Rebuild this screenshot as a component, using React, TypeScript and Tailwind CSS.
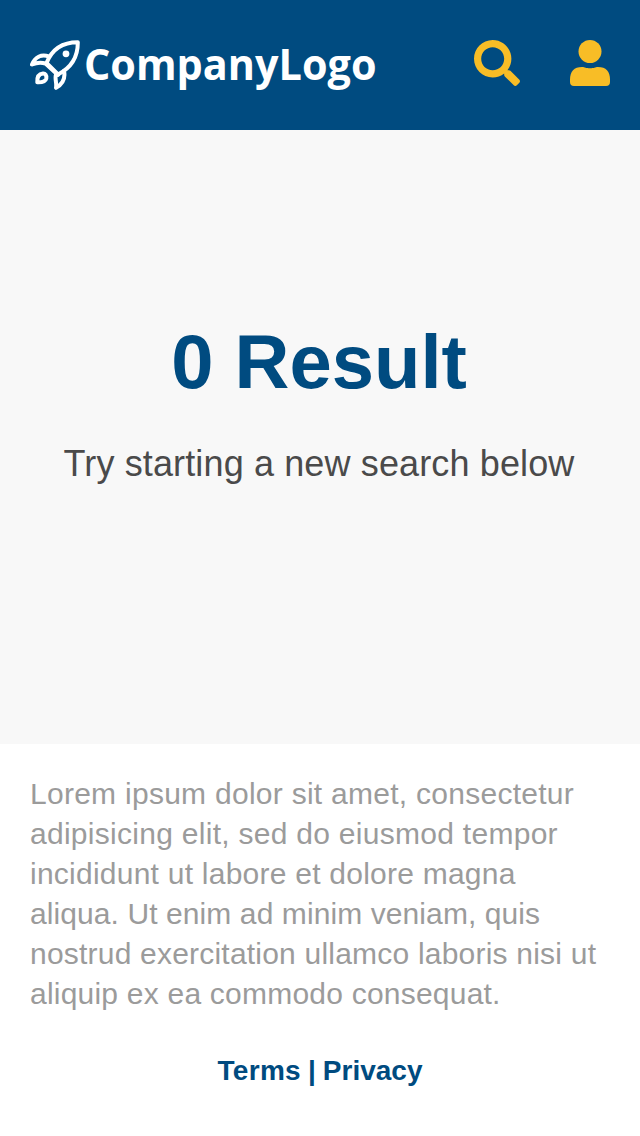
import { FaSearch } from "react-icons/fa";

function Rocket() {
  return (
    <svg viewBox="0 0 50 50" className="h-[50px] w-[50px] shrink-0" fill="none" stroke="white" strokeWidth="4" strokeLinejoin="round" strokeLinecap="round">
      <path d="M16.5 23C22 9 32 2.2 47.8 2.2C48 17 41 28 28 34.5Z" />
      <path d="M19 16.5C11 14 5 17 2 24.5C6.5 22.5 11 22 15.5 23.5L28 35" />
      <path d="M34 31C35.5 38 32.5 44 26 47.8C27 43 24.5 38.5 26 34.5" />
      <path d="M13 33.5C8 34 7 38 7.3 42.3C12 42.5 15.5 41.5 16.3 38.5C17 35.5 15 33.3 13 33.5Z" />
      <circle cx="36" cy="13.8" r="3.4" fill="white" stroke="none" />
    </svg>
  );
}

function User() {
  return (
    <svg viewBox="0 0 40 46" className="ml-[50px] h-[46px] w-10 shrink-0" fill="#f8bd26">
      <circle cx="20" cy="11.5" r="11.5" />
      <path d="M0 39.5C0 31.5 4 27 12 27C15 27 16 28.3 20 28.3C24 28.3 25 27 28 27C36 27 40 31.5 40 39.5V42Q40 46 36 46H4Q0 46 0 42Z" />
    </svg>
  );
}

export default function App() {
  return (
    <div className="flex h-[1136px] w-[640px] flex-col overflow-hidden bg-white font-['Liberation_Sans',Arial,sans-serif]">
      <header className="flex h-[130px] shrink-0 items-start bg-[#004b80] px-[30px] pt-10">
        <Rocket />
        <svg className="-mt-5 h-20 w-[310px] shrink-0 overflow-visible" viewBox="0 0 310 80">
          <text x="4" y="60.3" textLength="292.5" lengthAdjust="spacingAndGlyphs" fill="white" className="font-['Open_Sans',sans-serif] text-[43px] font-bold">CompanyLogo</text>
        </svg>
        <FaSearch className="ml-auto size-[46px] text-[#f8bd26]" />
        <User />
      </header>
      <main className="flex h-[614px] shrink-0 flex-col items-center bg-[#f8f8f8] pt-[187px] pr-0.5 whitespace-nowrap">
        <h1 className="text-[76px] leading-[90px] font-bold text-[#004b80]">0 Result</h1>
        <p className="mt-[33px] text-[36px] leading-[48px] tracking-[0.13px] text-[#4a4a4a]">Try starting a new search below</p>
      </main>
      <footer className="px-[30px] pt-[30px]">
        <p className="text-[30px] leading-10 tracking-[0.22px] whitespace-nowrap text-[#9b9b9b]">
          <span className="tracking-[0.27px]">Lorem ipsum dolor sit amet, consectetur</span><br />
          <span className="tracking-[0.28px]">adipisicing elit, sed do eiusmod tempor</span><br />
          <span className="tracking-[0.24px]">incididunt ut labore et dolore magna</span><br />
          <span className="tracking-[0.09px]">aliqua. Ut enim ad minim veniam, quis</span><br />
          <span className="tracking-[0.21px]">nostrud exercitation ullamco laboris nisi ut</span><br />
          aliquip ex ea commodo consequat.
        </p>
        <nav className="mt-[37px] flex justify-center gap-[7px] text-[28px] leading-10 font-bold text-[#004b80]">
          <a className="tracking-[0.3px]">Terms</a><span>|</span><a>Privacy</a>
        </nav>
      </footer>
    </div>
  );
}
